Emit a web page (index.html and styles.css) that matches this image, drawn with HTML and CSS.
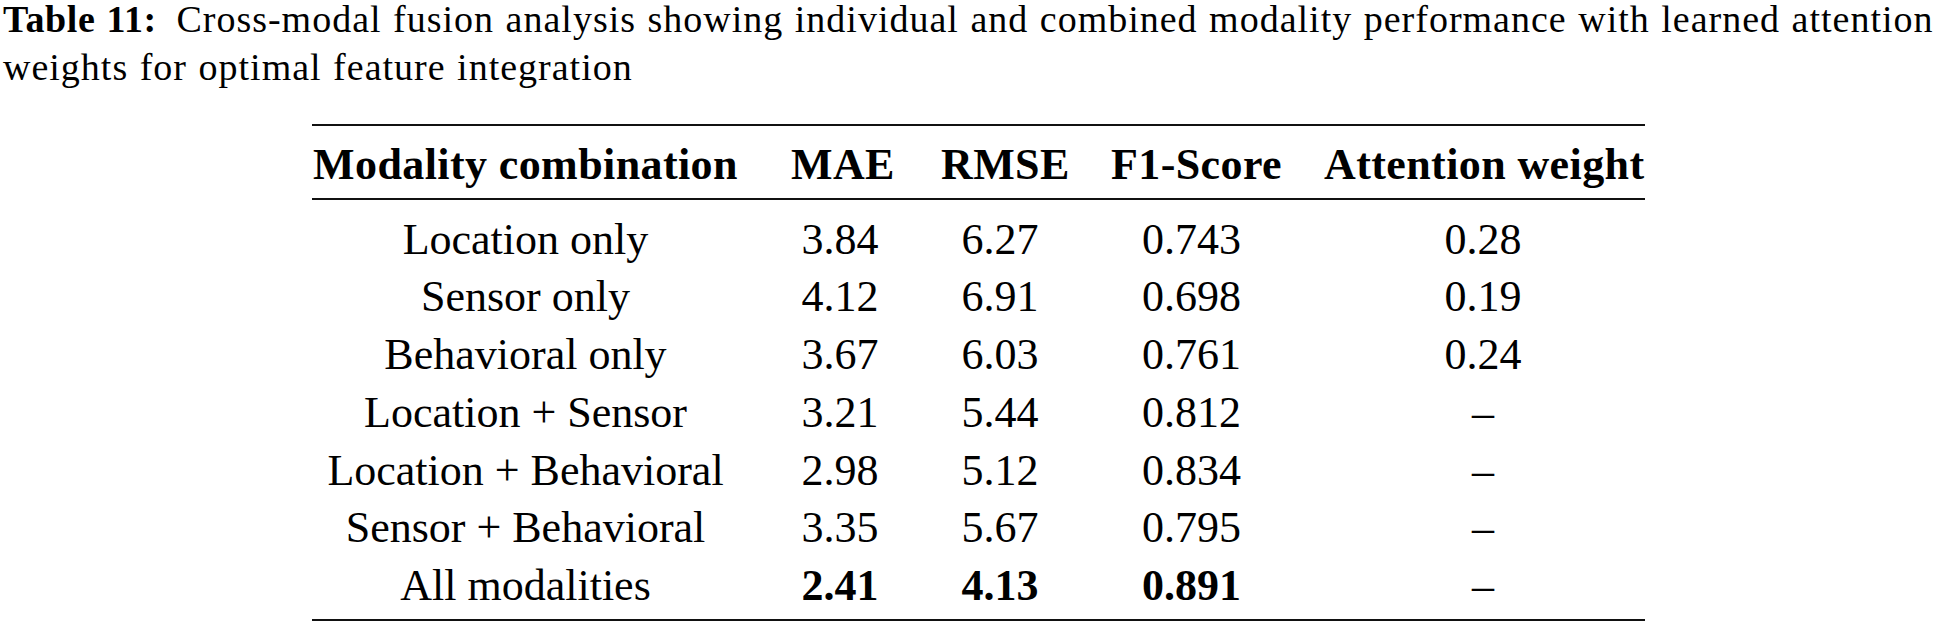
FILE: index.html
```html
<!DOCTYPE html>
<html lang="en">
<head>
<meta charset="utf-8">
<title>Table 11</title>
<link rel="stylesheet" href="styles.css">
</head>
<body>
<div class="page">
  <p class="caption"><span class="label">Table 11:</span> <span class="text">Cross-modal fusion analysis showing individual and combined modality performance with learned attention</span> <span class="text">weights for optimal feature integration</span></p>
  <table class="data">
    <colgroup>
      <col class="c1">
      <col class="c2">
      <col class="c3">
      <col class="c4">
      <col class="c5">
    </colgroup>
    <thead>
      <tr>
        <th class="first">Modality combination</th>
        <th>MAE</th>
        <th>RMSE</th>
        <th>F1-Score</th>
        <th class="last">Attention weight</th>
      </tr>
    </thead>
    <tbody>
      <tr class="top"><td class="first">Location only</td><td>3.84</td><td>6.27</td><td>0.743</td><td class="last">0.28</td></tr>
      <tr><td class="first">Sensor only</td><td>4.12</td><td>6.91</td><td>0.698</td><td class="last">0.19</td></tr>
      <tr><td class="first">Behavioral only</td><td>3.67</td><td>6.03</td><td>0.761</td><td class="last">0.24</td></tr>
      <tr><td class="first">Location + Sensor</td><td>3.21</td><td>5.44</td><td>0.812</td><td class="last">–</td></tr>
      <tr><td class="first">Location + Behavioral</td><td>2.98</td><td>5.12</td><td>0.834</td><td class="last">–</td></tr>
      <tr><td class="first">Sensor + Behavioral</td><td>3.35</td><td>5.67</td><td>0.795</td><td class="last">–</td></tr>
      <tr class="bottom"><td class="first">All modalities</td><td class="best">2.41</td><td class="best">4.13</td><td class="best">0.891</td><td class="last">–</td></tr>
    </tbody>
  </table>
</div>
</body>
</html>
```

FILE: styles.css
```css
html, body {
  margin: 0;
  padding: 0;
  background: #ffffff;
}

body {
  font-family: "Liberation Serif", "Times New Roman", serif;
  color: #000000;
}

.page {
  padding: 0 0 0 3px;
}

.caption {
  margin: -5px 0 0 0;
  font-size: 38px;
  line-height: 48px;
  letter-spacing: 1px;
  word-spacing: 1px;
}

.label {
  font-weight: bold;
  letter-spacing: 0.6px;
  margin-right: 8px;
}

.data {
  border-collapse: collapse;
  table-layout: fixed;
  width: 1333px;
  margin: 33px auto 0;
  font-size: 44px;
  line-height: 57.7px;
}

.c1 { width: 453px; }
.c2 { width: 150px; }
.c3 { width: 170px; }
.c4 { width: 213px; }
.c5 { width: 347px; }

.data th,
.data td {
  text-align: center;
  white-space: nowrap;
  padding: 0 26px;
  vertical-align: baseline;
}

.data th {
  font-weight: bold;
  letter-spacing: 0.4px;
  border-top: 2px solid #111111;
  border-bottom: 2px solid #111111;
  padding-top: 10px;
  padding-bottom: 4px;
}

.data .first {
  padding-left: 0;
}

.data .last {
  padding-right: 3px;
}

.data tr.top td {
  padding-top: 11px;
}

.data tr.bottom td {
  padding-bottom: 4px;
  border-bottom: 2px solid #111111;
}

.data td.best {
  font-weight: bold;
}
```
